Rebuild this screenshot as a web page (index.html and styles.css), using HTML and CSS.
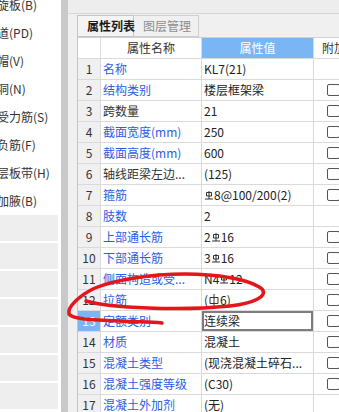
FILE: index.html
```html
<!DOCTYPE html>
<html lang="zh-CN">
<head>
  <meta charset="UTF-8">
  <meta name="viewport" content="width=device-width, initial-scale=1.0">
  <title>属性列表</title>
  <link rel="stylesheet" href="styles.css">
</head>
<body>
  <div class="screen">
    <aside class="tree">
      <ul class="tree-list">
        <li>螺旋板(B)</li>
        <li>坡道(PD)</li>
        <li>柱帽(V)</li>
        <li>板洞(N)</li>
        <li>板受力筋(S)</li>
        <li>板负筋(F)</li>
        <li>楼层板带(H)</li>
        <li>板加腋(B)</li>
      </ul>
      <div class="tree-blank"></div>
      <div class="tree-blank"></div>
      <div class="tree-blank"></div>
      <div class="tree-blank"></div>
      <div class="tree-blank"></div>
      <div class="tree-blank"></div>
      <div class="tree-blank"></div>
    </aside>

    <div class="splitter"></div>

    <section class="panel">
      <div class="panel-top"></div>
      <div class="tabs">
        <span class="tab active">属性列表</span>
        <span class="tab">图层管理</span>
      </div>

      <div class="props">
        <div class="row head">
          <div class="num"></div>
          <div class="name">属性名称</div>
          <div class="value">属性值</div>
          <div class="extra">附加</div>
        </div>
        <div class="row">
          <div class="num">1</div>
          <div class="name blue">名称</div>
          <div class="value">KL7(21)</div>
          <div class="extra"></div>
        </div>
        <div class="row">
          <div class="num">2</div>
          <div class="name blue">结构类别</div>
          <div class="value">楼层框架梁</div>
          <div class="extra"><span class="cb"></span></div>
        </div>
        <div class="row">
          <div class="num">3</div>
          <div class="name">跨数量</div>
          <div class="value">21</div>
          <div class="extra"><span class="cb"></span></div>
        </div>
        <div class="row">
          <div class="num">4</div>
          <div class="name blue">截面宽度(mm)</div>
          <div class="value">250</div>
          <div class="extra"><span class="cb"></span></div>
        </div>
        <div class="row">
          <div class="num">5</div>
          <div class="name blue">截面高度(mm)</div>
          <div class="value">600</div>
          <div class="extra"><span class="cb"></span></div>
        </div>
        <div class="row">
          <div class="num">6</div>
          <div class="name">轴线距梁左边...</div>
          <div class="value">(125)</div>
          <div class="extra"><span class="cb"></span></div>
        </div>
        <div class="row">
          <div class="num">7</div>
          <div class="name blue">箍筋</div>
          <div class="value"><svg class="bar3" viewBox="0 0 8 9"><path d="M4 0v8M1.5 1.5h5v3.5h-5zM0 8h8"/></svg>8@100/200(2)</div>
          <div class="extra"><span class="cb"></span></div>
        </div>
        <div class="row">
          <div class="num">8</div>
          <div class="name blue">肢数</div>
          <div class="value">2</div>
          <div class="extra"></div>
        </div>
        <div class="row">
          <div class="num">9</div>
          <div class="name blue">上部通长筋</div>
          <div class="value">2<svg class="bar3" viewBox="0 0 8 9"><path d="M4 0v8M1.5 1.5h5v3.5h-5zM0 8h8"/></svg>16</div>
          <div class="extra"><span class="cb"></span></div>
        </div>
        <div class="row">
          <div class="num">10</div>
          <div class="name blue">下部通长筋</div>
          <div class="value">3<svg class="bar3" viewBox="0 0 8 9"><path d="M4 0v8M1.5 1.5h5v3.5h-5zM0 8h8"/></svg>16</div>
          <div class="extra"><span class="cb"></span></div>
        </div>
        <div class="row">
          <div class="num">11</div>
          <div class="name blue">侧面构造或受...</div>
          <div class="value">N4<svg class="bar3" viewBox="0 0 8 9"><path d="M4 0v8M1.5 1.5h5v3.5h-5zM0 8h8"/></svg>12</div>
          <div class="extra"><span class="cb"></span></div>
        </div>
        <div class="row">
          <div class="num">12</div>
          <div class="name blue">拉筋</div>
          <div class="value">(<svg class="bar1" viewBox="0 0 10 13"><path d="M5 0v13M1 3.5h8v6h-8z"/></svg>6)</div>
          <div class="extra"><span class="cb"></span></div>
        </div>
        <div class="row">
          <div class="num selected">13</div>
          <div class="name blue">定额类别</div>
          <div class="value editing">连续梁</div>
          <div class="extra"><span class="cb"></span></div>
        </div>
        <div class="row">
          <div class="num">14</div>
          <div class="name blue">材质</div>
          <div class="value">混凝土</div>
          <div class="extra"><span class="cb"></span></div>
        </div>
        <div class="row">
          <div class="num">15</div>
          <div class="name blue">混凝土类型</div>
          <div class="value">(现浇混凝土碎石...</div>
          <div class="extra"><span class="cb"></span></div>
        </div>
        <div class="row">
          <div class="num">16</div>
          <div class="name blue">混凝土强度等级</div>
          <div class="value">(C30)</div>
          <div class="extra"><span class="cb"></span></div>
        </div>
        <div class="row">
          <div class="num">17</div>
          <div class="name blue">混凝土外加剂</div>
          <div class="value">(无)</div>
          <div class="extra"></div>
        </div>
      </div>
    </section>

    <!-- hand-drawn red circle over rows 11-13 -->
    <svg class="mark" viewBox="0 0 339 412">
      <path d="M86 301 C110 308 180 311 230 306 C255 303 268 296 262 289 C250 279 215 274 185 274 C150 274 115 280 95 288 C80 295 67 307 69 314 C72 319 90 320 120 321 C140 322 150 322 162 323"/>
    </svg>
  </div>
</body>
</html>
```

FILE: styles.css
```css
body {
  margin: 0;
  width: 339px;
  height: 412px;
  overflow: hidden;
  font-family: "Noto Sans CJK SC", "Microsoft YaHei", sans-serif;
  font-size: 12px;
  color: #333;
  background-color: #f0f0f0;
}
.screen {
  position: relative;
  display: flex;
  height: 412px;
}
.tree {
  flex: none;
  width: 61px;
  overflow: hidden;
  background-color: white;
}
.tree-list {
  list-style: none;
  margin: -9px 0 0 0;
  padding: 0;
}
.tree-list li {
  height: 28px;
  line-height: 28px;
  margin-left: -15px;
  white-space: nowrap;
}
.tree-blank {
  height: 26px;
  margin: 0 3px 2px 0;
  background-color: #eeeeee;
}
.splitter {
  flex: none;
  width: 7px;
  background-color: #c9c9c9;
}
.panel {
  flex: 1;
  min-width: 0;
  overflow: hidden;
  background-color: #f0f0f0;
}
.panel-top {
  height: 13px;
  border-bottom: 1px solid #d6d6d6;
  background-color: #ededed;
}
.tabs {
  display: flex;
  height: 23px;
  padding-left: 9px;
  background-color: #f0f0f0;
}
.tab {
  box-sizing: border-box;
  height: 22px;
  margin-top: 1px;
  padding-left: 9px;
  line-height: 20px;
  border: 1px solid #cfcfcf;
  border-left: none;
  color: #8c8c8c;
  white-space: nowrap;
  width: 65px;
}
.tab.active {
  width: 57px;
  border-left: 1px solid #c4c4c4;
  border-color: #c4c4c4;
  background-color: #f4f4f4;
  color: #1a1a1a;
  font-weight: bold;
}
.props {
  margin-left: 9px;
  border-left: 1px solid #c4c4c4;
  border-top: 1px solid #d0d0d0;
  background-color: white;
  width: 340px;
}
.row {
  display: grid;
  grid-template-columns: 23px 101px 112px 1fr;
  height: 21px;
}
.row > div {
  box-sizing: border-box;
  border-right: 1px solid #dadada;
  border-bottom: 1px solid #dadada;
  line-height: 20px;
  white-space: nowrap;
  overflow: hidden;
}
.num {
  text-align: center;
  background-color: #f0f0f0;
}
.num.selected {
  background-color: #7ab6f3;
  color: white;
}
.name,
.value {
  padding-left: 2px;
}
.blue {
  color: #2c5ce4;
}
.value {
  color: #222;
}
.value.editing {
  box-shadow: inset 0 0 0 2px #7d7d7d;
}
.extra {
  display: flex;
  align-items: center;
  padding-left: 13px;
}
.head .num {
  background-color: white;
}
.head .name {
  text-align: center;
  padding-left: 0;
}
.head .value {
  text-align: center;
  padding-left: 0;
  background-color: #7ab6f3;
  color: white;
}
.head .extra {
  display: block;
  padding-left: 8px;
}
.cb {
  box-sizing: border-box;
  width: 13px;
  height: 12px;
  border: 1px solid #555;
  border-radius: 2px;
  background-color: white;
}
.bar3 {
  width: 8px;
  height: 9px;
  margin: 0 1px;
  vertical-align: 0;
  fill: none;
  stroke: #333;
  stroke-width: 1;
}
.bar1 {
  width: 10px;
  height: 13px;
  margin: 0 1px;
  vertical-align: -2px;
  fill: none;
  stroke: #333;
  stroke-width: 1;
}
.mark {
  position: absolute;
  left: 0;
  top: 0;
  width: 339px;
  height: 412px;
  pointer-events: none;
  fill: none;
  stroke: #e3161c;
  stroke-width: 3.5;
  stroke-linecap: round;
  stroke-linejoin: round;
}
```
